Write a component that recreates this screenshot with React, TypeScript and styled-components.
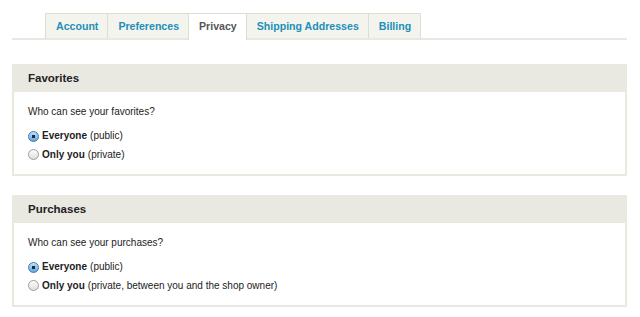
import * as React from 'react';
import styled, {createGlobalStyle} from 'styled-components';

const GlobalStyle = createGlobalStyle`
  body {
    margin: 0;
    background: #fff;
    font-family: "Liberation Sans", Arial, sans-serif;
    color: #222;
  }
`;

const Page = styled.div`
  padding: 13px 13px 0 12px;
`;

const TabBar = styled.div`
  display: flex;
  padding-left: 33px;
  border-bottom: 2px solid #e8e7e1;
`;

const Tab = styled.div<{ $active?: boolean }>`
  padding: 0 9px 0 10px;
  display: flex;
  align-items: center;
  margin-bottom: -2px;
  border: 1px solid #dddcd5;
  border-bottom: none;
  margin-left: -1px;
  background: ${p => (p.$active ? '#fff' : '#f4f4ef')};
  color: ${p => (p.$active ? '#555' : '#1d8fb8')};
  font-size: 10.6px;
  font-weight: bold;
  padding-bottom: ${p => (p.$active ? '2px' : '0')};
  height: ${p => (p.$active ? '27px' : '25px')};
  box-sizing: border-box;
  &:first-child {
    margin-left: 0;
  }
`;

const Panel = styled.section`
  margin-top: 24px;
  border: 2px solid #e9e8e1;
  border-top: none;
  & + & {
    margin-top: 19px;
  }
`;

const PanelHeader = styled.h2`
  margin: 0 -2px;
  background: #e9e8e1;
  height: 28px;
  padding: 0 16px;
  display: flex;
  align-items: center;
  font-size: 11.5px;
  font-weight: bold;
  color: #222;
`;

const PanelBody = styled.div`
  padding: 13px 14px 10px;
  font-size: 10px;
`;

const Question = styled.p`
  margin: 0 0 8px;
  line-height: 14px;
`;

const Option = styled.label`
  display: flex;
  align-items: center;
  height: 18.5px;
  line-height: 14px;
`;

const Radio = styled.input.attrs({type: 'radio'})`
  appearance: none;
  width: 11px;
  height: 11px;
  margin: 0 3px 0 0;
  border-radius: 50%;
  border: 1px solid #9d9d9d;
  background: linear-gradient(#fdfdfd, #dedede);
  box-sizing: border-box;
  &:checked {
    border-color: #4a76a6;
    background: radial-gradient(circle, #1d2b3a 0 1.6px, transparent 2px),
      linear-gradient(#bfe0fb, #5ba7e7);
  }
`;

const Strong = styled.b`
  margin-right: 3px;
`;

type Choice = { label: string; note: string; checked: boolean };

function PrivacyPanel({title, question, name, choices}: {
  title: string; question: string; name: string; choices: Choice[];
}) {
  return (
    <Panel>
      <PanelHeader>{title}</PanelHeader>
      <PanelBody>
        <Question>{question}</Question>
        {choices.map(c => (
          <Option key={c.label}>
            <Radio name={name} defaultChecked={c.checked}/>
            <Strong>{c.label}</Strong>({c.note})
          </Option>
        ))}
      </PanelBody>
    </Panel>
  );
}

export default function App() {
  const tabs = ['Account', 'Preferences', 'Privacy', 'Shipping Addresses', 'Billing'];
  return (
    <Page>
      <GlobalStyle/>
      <TabBar>
        {tabs.map(t => <Tab key={t} $active={t === 'Privacy'}>{t}</Tab>)}
      </TabBar>
      <PrivacyPanel
        title="Favorites"
        question="Who can see your favorites?"
        name="favorites"
        choices={[
          {label: 'Everyone', note: 'public', checked: true},
          {label: 'Only you', note: 'private', checked: false},
        ]}
      />
      <PrivacyPanel
        title="Purchases"
        question="Who can see your purchases?"
        name="purchases"
        choices={[
          {label: 'Everyone', note: 'public', checked: true},
          {label: 'Only you', note: 'private, between you and the shop owner', checked: false},
        ]}
      />
    </Page>
  );
}
